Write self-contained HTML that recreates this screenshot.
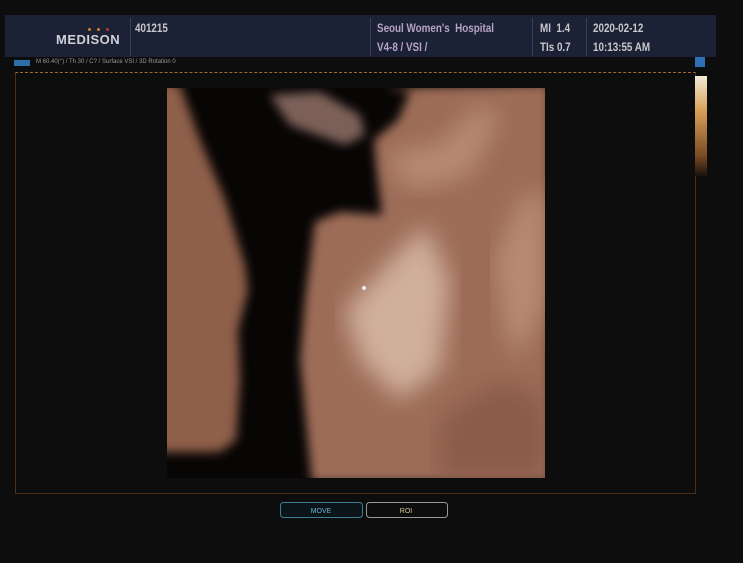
<!DOCTYPE html>
<html><head><style>
body{margin:0;width:743px;height:563px;background:#0d0d0e;overflow:hidden;position:relative;font-family:"Liberation Sans",sans-serif}
.a{position:absolute}
.hd{left:5px;top:15px;width:711px;height:42px;background:#1c2236}
.t{color:#c8c8cc;font-size:12px;font-weight:bold;transform:scaleX(.82);transform-origin:left}
.p{color:#b9a2c9}
</style></head><body>
<div class="a hd"></div>
<div class="a" style="left:130px;top:18px;width:1px;height:38px;background:#3a3f55"></div>
<div class="a" style="left:370px;top:18px;width:1px;height:38px;background:#3a3f55"></div>
<div class="a" style="left:532px;top:18px;width:1px;height:38px;background:#3a3f55"></div>
<div class="a" style="left:586px;top:18px;width:1px;height:38px;background:#3a3f55"></div>
<div class="a" style="left:88px;top:28px;width:3px;height:3px;background:#d08030;border-radius:50%"></div>
<div class="a" style="left:97px;top:28px;width:3px;height:3px;background:#d08030;border-radius:50%"></div>
<div class="a" style="left:106px;top:28px;width:3px;height:3px;background:#c03030;border-radius:50%"></div>
<div class="a" style="left:56px;top:32px;color:#d0d0d8;font-size:13px;font-weight:bold;letter-spacing:.5px">MEDISON</div>
<div class="a t" style="left:135px;top:21px">401215</div>
<div class="a t p" style="left:377px;top:21px">Seoul Women's&nbsp; Hospital</div>
<div class="a t p" style="left:377px;top:40px">V4-8 / VSI /</div>
<div class="a t" style="left:540px;top:21px">MI&nbsp; 1.4</div>
<div class="a t" style="left:540px;top:40px">TIs 0.7</div>
<div class="a t" style="left:593px;top:21px">2020-02-12</div>
<div class="a t" style="left:593px;top:40px">10:13:55 AM</div>
<div class="a" style="left:14px;top:60px;width:16px;height:6px;background:#2a6fa8"></div>
<div class="a" style="left:36px;top:59px;color:#999;font-size:6px">M 60.40(°) / Th 30 / C? / Surface VSI / 3D Rotation 0</div>
<div class="a" style="left:695px;top:57px;width:10px;height:10px;background:#2f6fb5"></div>
<div class="a" style="left:15px;top:72px;width:679px;height:420px;border:1px solid #4a3018;border-top:1px dashed #a06a30"></div>
<div class="a" style="left:695px;top:76px;width:12px;height:100px;background:linear-gradient(#f3ead8,#d8a055 35%,#7a4a25 80%,#1a120c)"></div>
<svg class="a" style="left:0;top:0" width="743" height="563">
<defs><filter id="b"><feGaussianBlur stdDeviation="5"/></filter><filter id="c"><feGaussianBlur stdDeviation="12"/></filter>
<clipPath id="k"><rect x="167" y="88" width="378" height="390"/></clipPath></defs>
<rect x="167" y="88" width="378" height="390" fill="#080505"/>
<g clip-path="url(#k)">
<path d="M150 80 L180 85 L200 140 L225 200 L245 265 L248 290 L238 330 L240 380 L236 440 L220 452 L150 452Z" fill="#8e5e4a" filter="url(#b)"/>
<path d="M270 95 L320 92 L360 115 L365 135 L345 145 L290 125Z" fill="#7c6058" filter="url(#b)"/>
<path d="M385 88 L550 84 L550 482 L312 482 L300 360 L305 300 L315 222 L340 212 L382 215 L378 180 L374 140 L398 120 L410 92Z" fill="#9c6c56" filter="url(#b)"/>
<path d="M345 310 L400 250 L425 225 L450 280 L440 370 L400 400 L360 360Z" fill="#d0af9c" filter="url(#c)"/>
<path d="M385 155 L440 145 L480 105 L500 115 L470 175 L410 190Z" fill="#b88a74" filter="url(#c)"/>
<path d="M495 260 L520 200 L545 190 L545 300 L520 360 L505 330Z" fill="#b88a74" filter="url(#c)"/>
<path d="M440 420 L500 380 L545 400 L545 478 L440 478Z" fill="#8a5c48" filter="url(#c)"/>
</g>
<circle cx="364" cy="288" r="2" fill="#eee"/>
<rect x="280.5" y="502.5" width="82" height="15" rx="3" fill="#0b1418" stroke="#3c7f95"/>
<rect x="366.5" y="502.5" width="81" height="15" rx="3" fill="#0d0d0e" stroke="#999"/>
<text x="321" y="513" fill="#6db6d6" font-size="7" text-anchor="middle" font-family="Liberation Sans">MOVE</text>
<text x="406" y="513" fill="#d6c890" font-size="7" text-anchor="middle" font-family="Liberation Sans">ROI</text>
</svg>
</body></html>
